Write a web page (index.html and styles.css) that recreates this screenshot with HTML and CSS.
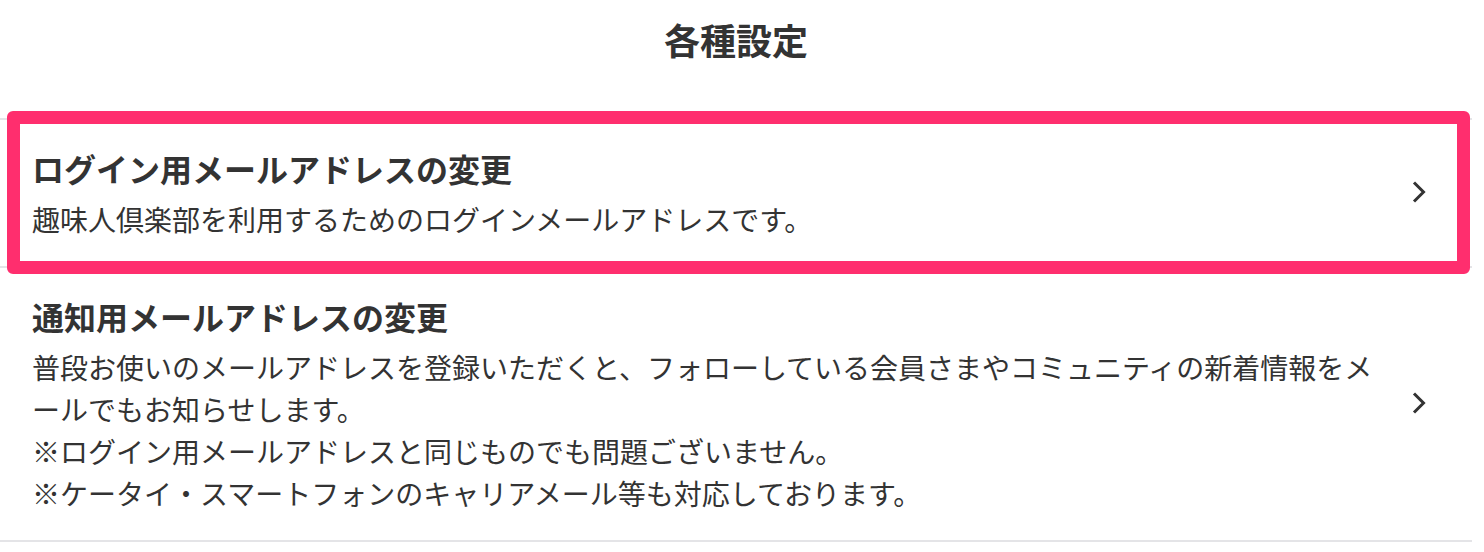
FILE: index.html
```html
<!DOCTYPE html>
<html lang="ja">
<head>
    <meta charset="UTF-8">
    <meta name="viewport" content="width=device-width, initial-scale=1.0">
    <title>各種設定</title>
    <link rel="stylesheet" href="styles.css">
</head>
<body>
    <div class="settings">
        <h1 class="settings-title">各種設定</h1>

        <ul class="settings-list">
            <li class="settings-item is-current">
                <a href="#" class="settings-link">
                    <div class="settings-text">
                        <h2 class="item-title">ログイン用メールアドレスの変更</h2>
                        <p class="item-desc">趣味人倶楽部を利用するためのログインメールアドレスです。</p>
                    </div>
                    <svg class="chevron" width="14" height="22" viewBox="0 0 14 22" aria-hidden="true"><path d="M2 1.5 L11.5 11 L2 20.5" fill="none" stroke="#333" stroke-width="3"/></svg>
                </a>
            </li>
            <li class="settings-item">
                <a href="#" class="settings-link">
                    <div class="settings-text">
                        <h2 class="item-title">通知用メールアドレスの変更</h2>
                        <p class="item-desc">普段お使いのメールアドレスを登録いただくと、フォローしている会員さまやコミュニティの新着情報をメールでもお知らせします。<br>※ログイン用メールアドレスと同じものでも問題ございません。<br>※ケータイ・スマートフォンのキャリアメール等も対応しております。</p>
                    </div>
                    <svg class="chevron" width="14" height="22" viewBox="0 0 14 22" aria-hidden="true"><path d="M2 1.5 L11.5 11 L2 20.5" fill="none" stroke="#333" stroke-width="3"/></svg>
                </a>
            </li>
        </ul>
    </div>
</body>
</html>
```

FILE: styles.css
```css
/* 各種設定ページ */
body { margin: 0; background-color: #fff; color: #333; font-family: "Noto Sans CJK JP", "Noto Sans", sans-serif; }
.settings { margin-right: 12px; }
.settings-title { margin: 0; padding: 12px 0 52px 0; font-size: 36px; line-height: 54px; font-weight: bold; text-align: center; }

.settings-list { list-style: none; margin: 0; padding: 0; border-top: 2px solid #e4e4e7; }
.settings-item { position: relative; border-bottom: 2px solid #e4e4e7; }
.settings-link { display: flex; align-items: center; gap: 20px; padding: 24px 46px 26px 32px; color: inherit; text-decoration: none; }
.settings-text { flex: 1; min-width: 0; }
.item-title { margin: 0 0 6px 0; font-size: 32px; line-height: 48px; font-weight: bold; }
.item-desc { margin: 0; font-size: 28px; line-height: 42px; line-break: loose; }
.chevron { flex-shrink: 0; display: block; }

/* 選択中の項目を囲む枠 */
.settings-item.is-current::after { content: ""; position: absolute; top: -9px; bottom: -8px; left: 7px; right: 2px; border: 13px solid #ff2e6e; border-radius: 6px; pointer-events: none; }
```
